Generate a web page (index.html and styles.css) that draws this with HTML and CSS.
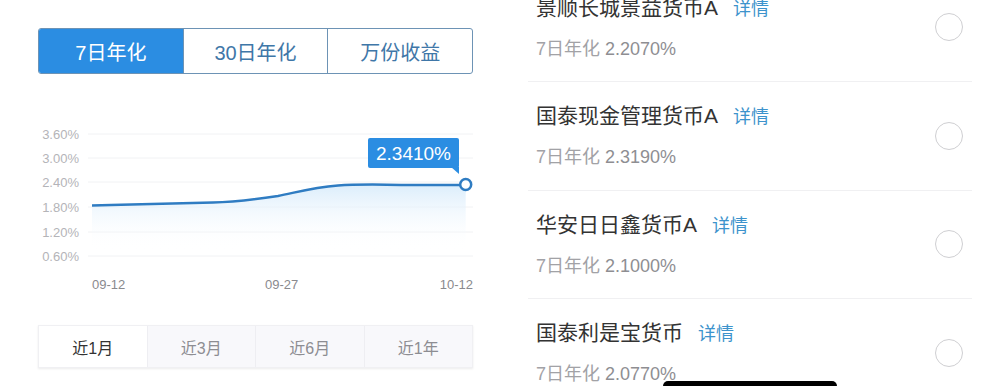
FILE: index.html
```html
<!DOCTYPE html>
<html lang="zh-CN">
  <head>
    <meta charset="UTF-8" />
    <meta name="viewport" content="width=device-width, initial-scale=1.0" />
    <title>货币基金</title>
    <link rel="stylesheet" href="styles.css">
  </head>
  <body>
    <div class="page">
      <div class="left">
        <div class="rate-tabs">
          <div class="rate-tab active">7日年化</div>
          <div class="rate-tab">30日年化</div>
          <div class="rate-tab">万份收益</div>
        </div>

        <svg class="chart" width="435" height="180" viewBox="0 0 435 180">
          <defs>
            <linearGradient id="fill" x1="0" y1="0" x2="0" y2="1">
              <stop offset="0" stop-color="#d7ebfb" stop-opacity="0.9" />
              <stop offset="1" stop-color="#ffffff" stop-opacity="0" />
            </linearGradient>
          </defs>
          <g class="grid">
            <line x1="50" y1="14" x2="435" y2="14" />
            <line x1="50" y1="38" x2="435" y2="38" />
            <line x1="50" y1="62" x2="435" y2="62" />
            <line x1="50" y1="87" x2="435" y2="87" />
            <line x1="50" y1="112" x2="435" y2="112" />
            <line x1="50" y1="136" x2="435" y2="136" />
          </g>
          <g class="ylabels">
            <text x="41" y="18.5">3.60%</text>
            <text x="41" y="42.5">3.00%</text>
            <text x="41" y="66.5">2.40%</text>
            <text x="41" y="91.5">1.80%</text>
            <text x="41" y="116.5">1.20%</text>
            <text x="41" y="140.5">0.60%</text>
          </g>
          <path class="area" d="M54 85.5 C100 84,150 83,175 82.5 C200 82,220 79,240 76 C260 72,275 67.5,300 65.5 C320 64,340 64.5,370 65 L427.7 65 L427.7 130 L54 130 Z" />
          <path class="line" d="M54 85.5 C100 84,150 83,175 82.5 C200 82,220 79,240 76 C260 72,275 67.5,300 65.5 C320 64,340 64.5,370 65 L427.7 65" />
          <rect class="tip" x="330" y="18" width="91" height="30" rx="2" />
          <path class="tip" d="M413 47 L421 47 L421 54 Z" />
          <text class="tip-text" x="375.5" y="40">2.3410%</text>
          <circle class="dot" cx="427.7" cy="64.5" r="5.5" />
          <g class="xlabels">
            <text x="54" y="169">09-12</text>
            <text x="227" y="169">09-27</text>
            <text x="435" y="169" text-anchor="end">10-12</text>
          </g>
        </svg>

        <div class="period-tabs">
          <div class="period-tab active">近1月</div>
          <div class="period-tab">近3月</div>
          <div class="period-tab">近6月</div>
          <div class="period-tab">近1年</div>
        </div>
      </div>

      <div class="right">
        <div class="fund-list">
          <div class="fund">
            <div class="fund-info">
              <div class="fund-name">景顺长城景益货币A<span class="detail">详情</span></div>
              <div class="fund-rate">7日年化 <span class="num">2.2070%</span></div>
            </div>
            <div class="radio"></div>
          </div>
          <div class="fund">
            <div class="fund-info">
              <div class="fund-name">国泰现金管理货币A<span class="detail">详情</span></div>
              <div class="fund-rate">7日年化 <span class="num">2.3190%</span></div>
            </div>
            <div class="radio"></div>
          </div>
          <div class="fund">
            <div class="fund-info">
              <div class="fund-name">华安日日鑫货币A<span class="detail">详情</span></div>
              <div class="fund-rate">7日年化 <span class="num">2.1000%</span></div>
            </div>
            <div class="radio"></div>
          </div>
          <div class="fund">
            <div class="fund-info">
              <div class="fund-name">国泰利是宝货币<span class="detail">详情</span></div>
              <div class="fund-rate">7日年化 <span class="num">2.0770%</span></div>
            </div>
            <div class="radio"></div>
          </div>
        </div>
      </div>
    </div>
    <div class="home-bar"></div>
  </body>
</html>
```

FILE: styles.css
```css
html,
body {
  margin: 0;
  height: 386px;
  overflow: hidden;
  background-color: #fff;
  font-family: "Liberation Sans", "Noto Sans CJK SC", sans-serif;
}
.page {
  display: flex;
}
.left {
  width: 435px;
  padding: 28px 0 0 38px;
}
.rate-tabs {
  display: flex;
  height: 46px;
  border: 1px solid #6d93b5;
  border-radius: 3px;
  box-sizing: border-box;
  overflow: hidden;
}
.rate-tab {
  flex: 1;
  display: flex;
  align-items: center;
  justify-content: center;
  font-size: 20px;
  color: #3f77a8;
  border-left: 1px solid #6d93b5;
}
.rate-tab:first-child {
  border-left: none;
}
.rate-tab.active {
  background-color: #2b8de2;
  color: #fff;
}
.chart {
  display: block;
  margin-top: 46px;
}
.grid line {
  stroke: #f1f2f4;
  stroke-width: 1;
}
.ylabels text {
  font-size: 13px;
  fill: #b4b4b8;
  text-anchor: end;
}
.xlabels text {
  font-size: 13px;
  fill: #8a8a8e;
}
.area {
  fill: url(#fill);
}
.line {
  fill: none;
  stroke: #2f7cc2;
  stroke-width: 2.5;
}
.tip {
  fill: #2b8de2;
}
.tip-text {
  font-size: 19px;
  fill: #fff;
  text-anchor: middle;
}
.dot {
  fill: #fff;
  stroke: #2f7cc2;
  stroke-width: 2.5;
}
.period-tabs {
  display: flex;
  height: 43px;
  margin-top: 25px;
  box-shadow: 0 1px 2px rgba(0, 0, 0, 0.08);
  border: 1px solid #f0f0f3;
  box-sizing: border-box;
}
.period-tab {
  flex: 1;
  display: flex;
  align-items: center;
  justify-content: center;
  font-size: 16px;
  color: #8d8d92;
  background-color: #f8f8fb;
  border-left: 1px solid #eeeef2;
}
.period-tab:first-child {
  border-left: none;
}
.period-tab.active {
  background-color: #fff;
  color: #333;
}
.right {
  width: 444px;
  margin-left: 55px;
}
.fund-list {
  margin-top: -26.5px;
}
.fund {
  display: flex;
  align-items: center;
  height: 108.5px;
  box-sizing: border-box;
  border-bottom: 1px solid #f0f0f2;
}
.fund-info {
  flex: 1;
  padding-left: 8px;
}
.fund-name {
  font-size: 21px;
  line-height: 28px;
  color: #333;
}
.detail {
  font-size: 18px;
  color: #3d93cc;
  margin-left: 15px;
}
.fund-rate {
  margin-top: 14px;
  font-size: 18px;
  line-height: 24px;
  color: #a2a2a6;
}
.fund-rate .num {
  color: #8e8e92;
}
.radio {
  width: 26px;
  height: 26px;
  margin-right: 9px;
  border: 1.5px solid #cfcfd2;
  border-radius: 50%;
}
.home-bar {
  position: absolute;
  left: 663px;
  top: 381px;
  width: 174px;
  height: 10px;
  background-color: #000;
  border-radius: 5px;
}
```
